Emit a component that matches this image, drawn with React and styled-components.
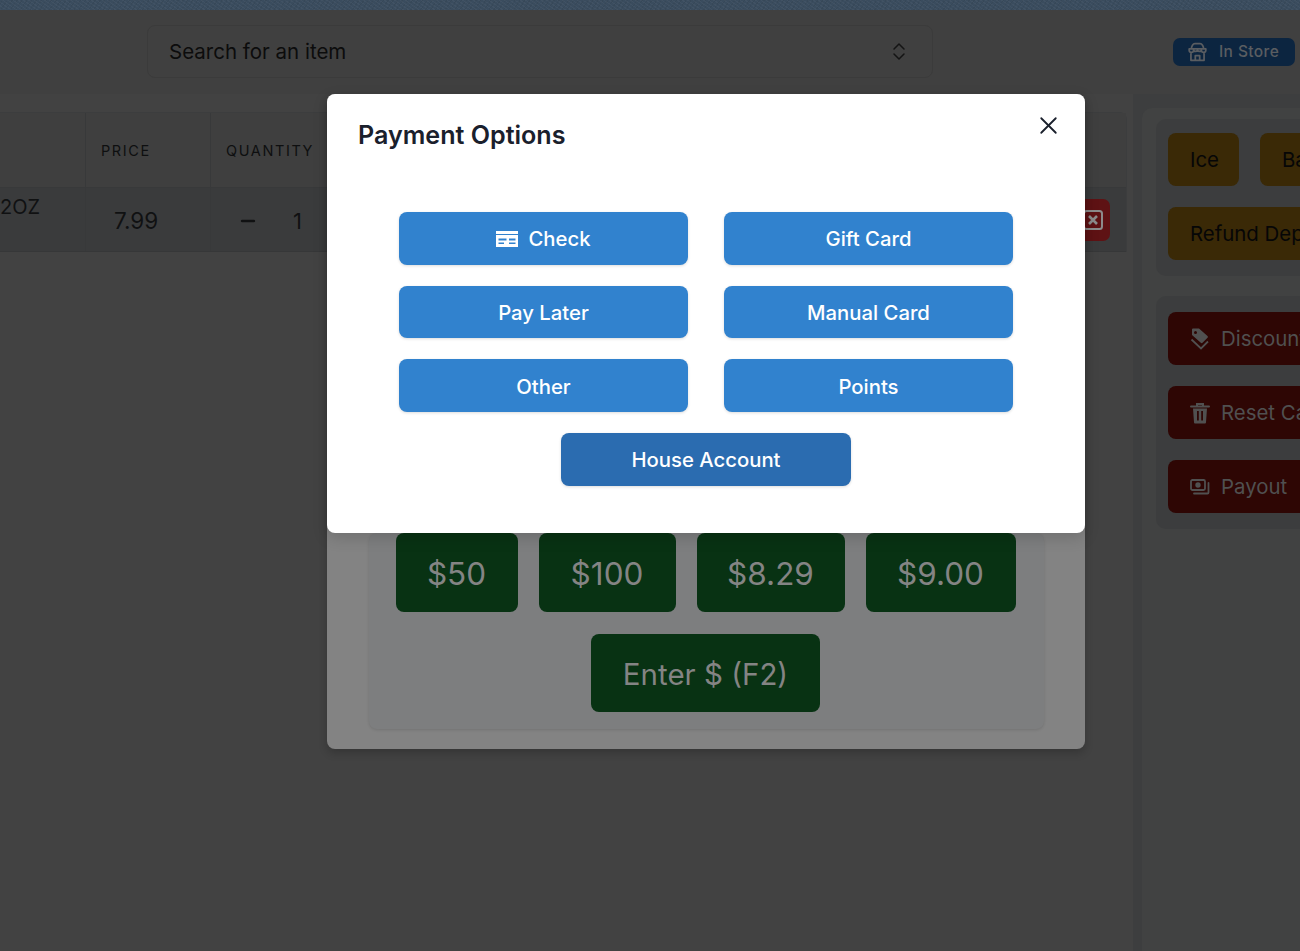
import React from "react";
import styled, { createGlobalStyle } from "styled-components";
import { X, Minus } from "lucide-react";

const Global = createGlobalStyle`
  html, body { margin: 0; padding: 0; height: 100%; }
  body { background: #404040; font-family: Inter, "Noto Sans", sans-serif; overflow: hidden; }
  * { box-sizing: border-box; }
`;

const Page = styled.div`
  position: relative;
  width: 1300px;
  height: 951px;
  overflow: hidden;
  background: #404040;
`;
const TopBand = styled.div`
  height: 10px;
  background:
    repeating-linear-gradient(35deg, rgba(255,255,255,.035) 0 1px, transparent 1px 3px),
    repeating-linear-gradient(-55deg, rgba(0,0,0,.06) 0 1px, transparent 1px 4px),
    #3a4c5e;
`;
const Header = styled.header`
  height: 84px;
  display: flex;
  align-items: center;
  padding: 0 5px 0 147px;
  background: #404040;
`;
const SearchBox = styled.div`
  width: 786px;
  height: 53px;
  margin-top: -1px;
  display: flex;
  align-items: center;
  justify-content: space-between;
  padding: 0 26px 0 21px;
  border: 1px solid #3b3b3b;
  border-radius: 8px;
  font-size: 20.500px;
  color: #0c0c0c;
`;
const StoreBadge = styled.div`
  margin-left: auto;
  margin-top: -1px;
  width: 122px;
  height: 28px;
  display: flex;
  align-items: center;
  gap: 11px;
  padding-left: 14px;
  border-radius: 7px;
  background: #0c2540;
  color: #5a5d61;
  font-size: 15.500px;
  font-weight: 500;
  letter-spacing: 0.4px;
`;
const Body = styled.main`
  height: 857px;
  display: grid;
  grid-template-columns: 1133px 1fr;
  background: #404040;
`;
const LeftPane = styled.section`
  padding: 18px 6px 0 0;
  background: #424242;
`;
const TableFrame = styled.div`
  height: 140px;
  border: 1px solid #3c3d3e;
  border-left: 0;
  border-radius: 0 8px 0 0;
`;
const HeadRow = styled.div`
  height: 75px;
  display: grid;
  grid-template-columns: 86px 125px 1fr;
  background: #3f3f3f;
  border-bottom: 1px solid #38393a;
`;
const DataRow = styled.div`
  height: 64px;
  display: grid;
  grid-template-columns: 86px 125px 1fr;
  background: #3a3b3c;
  border-bottom: 1px solid #363738;
  position: relative;
`;
const HeadCell = styled.div`
  display: flex;
  align-items: center;
  padding-left: 15px;
  border-right: 1px solid #38393a;
  font-size: 14.500px;
  font-weight: 400;
  letter-spacing: 1.600px;
  color: #0e0f10;
  &:last-child { border-right: 0; }
`;
const NameCell = styled.div`
  padding-top: 7px;
  font-size: 20px;
  color: #101112;
  border-right: 1px solid #38393a;
`;
const PriceCell = styled.div`
  display: flex;
  align-items: center;
  padding: 2px 0 0 28px;
  font-size: 22.500px;
  color: #101112;
  border-right: 1px solid #38393a;
`;
const QtyCell = styled.div`
  display: flex;
  align-items: center;
  padding: 2px 0 0 27px;
  gap: 35px;
  font-size: 22px;
  color: #101112;
`;
const DeleteButton = styled.div`
  position: absolute;
  right: 16px;
  top: 11px;
  width: 42px;
  height: 42px;
  border-radius: 7px;
  background: #5e1214;
  display: flex;
  align-items: center;
  justify-content: flex-end;
  padding-right: 7px;
  color: #8c8c8c;
`;
const RightPane = styled.aside`
  padding: 14px 0 0 9px;
  background: #3d3e3f;
`;
const RightSheet = styled.div`
  height: 100%;
  border-radius: 10px 0 0 0;
  background: #414242;
  padding: 11px 0 0 14px;
  display: flex;
  flex-direction: column;
  gap: 20px;
`;
const ActionGroup = styled.div`
  background: #3c3d3e;
  border-radius: 10px 0 0 10px;
  padding: ${(p) => (p.$tight ? "14px" : "16px")} 0 16px 12px;
  display: flex;
  flex-direction: column;
  gap: 21px;
  white-space: nowrap;
  overflow: hidden;
`;
const ActionRow = styled.div`
  display: flex;
  gap: 21px;
`;
const ActionButton = styled.div`
  height: 53px;
  padding: 0 20px 0 22px;
  flex: none;
  align-self: flex-start;
  display: flex;
  align-items: center;
  gap: 11px;
  border-radius: 8px;
  font-size: 20.400px;
  background: ${(p) => (p.$tone === "red" ? "#2e0604" : "#3a2906")};
  color: ${(p) => (p.$tone === "red" ? "#505050" : "#060606")};
`;
const Under = styled.div`
  position: absolute;
  left: 327px;
  top: 94px;
  width: 758px;
  height: 655px;
  background: #838383;
  border-radius: 8px;
  box-shadow: 0 4px 8px rgba(0,0,0,.2);
  padding: 0 41px 20px 42px;
  display: flex;
  flex-direction: column;
  justify-content: flex-end;
`;
const CashPanel = styled.div`
  background: #7d7e7f;
  border-radius: 8px;
  box-shadow: 0 1px 3px rgba(0,0,0,.12);
  padding: 0 2px 17px 0;
  display: flex;
  flex-direction: column;
  align-items: center;
  gap: 22px;
`;
const CashRow = styled.div`
  display: flex;
  gap: 21px;
`;
const CashButton = styled.div`
  height: ${(p) => (p.$small ? 78 : 79)}px;
  width: ${(p) => p.$width}px;
  padding-top: 1px;
  display: flex;
  align-items: center;
  justify-content: center;
  border-radius: 8px;
  background: #083213;
  color: #848484;
  font-size: ${(p) => (p.$small ? "29.500px" : "31.500px")};
`;
const Sheet = styled.div`
  position: absolute;
  left: 327px;
  top: 94px;
  width: 758px;
  height: 439px;
  background: #fff;
  border-radius: 8px;
  box-shadow: 0 5px 15px rgba(0,0,0,.15);
  padding: 25px 32px 0;
`;
const Title = styled.h2`
  margin: 0 0 0 -1px;
  height: 32px;
  line-height: 32px;
  font-size: 25.100px;
  font-weight: 600;
  color: #1a202c;
`;
const CloseButton = styled.button`
  position: absolute;
  top: 15px;
  right: 21px;
  width: 32px;
  height: 32px;
  padding: 0;
  border: 0;
  background: none;
  color: #1a202c;
  display: flex;
  align-items: center;
  justify-content: center;
`;
const OptionGrid = styled.div`
  margin: 61px 40px 0;
  display: grid;
  grid-template-columns: 289px 289px;
  gap: 21px 36px;
  justify-content: space-between;
`;
const OptionButton = styled.button`
  height: 52.670px;
  border: 0;
  border-radius: 8px;
  padding: 1px 0 0;
  background: ${(p) => (p.$dark ? "#2b6cb0" : "#3182ce")};
  color: #fff;
  font-family: inherit;
  font-size: 20.300px;
  font-weight: 500;
  display: flex;
  align-items: center;
  justify-content: center;
  gap: 10px;
  box-shadow: 0 1px 3px rgba(0,0,0,.14);
  ${(p) => p.$center && `grid-column: 1 / -1; justify-self: center; width: 290px;`}
`;

const CheckIcon = () => (
  <svg width="22" height="16" viewBox="0 0 22 16" fill="currentColor" aria-hidden="true">
    <path fillRule="evenodd" d="M0 0h22v3H0zM0 4h22v12H0zM2.500 7.500v2h8v-2zm0 4v1.500h5.500V11.500zM13 7.500v2h6.500v-2zm0 4v1.500h6.500V11.500z" />
  </svg>
);
const UpDownIcon = () => (
  <svg width="14" height="19" viewBox="0 0 14 19" fill="none" stroke="#141414" strokeWidth="1.500" strokeLinecap="round" strokeLinejoin="round" aria-hidden="true">
    <path d="M2 7l5-5 5 5M2 12l5 5 5-5" />
  </svg>
);
const StoreIcon = () => (
  <svg width="21" height="22" viewBox="0 0 24 24" fill="none" stroke="currentColor" strokeWidth="2" strokeLinecap="round" strokeLinejoin="round" aria-hidden="true">
    <path d="M5 8.500C5 5 7 2.500 9 2.500h6c2 0 4 2.500 4 6M2.500 8.500h19v1.500a2.500 2.500 0 0 1-5 0 2.500 2.500 0 0 1-4.500 0 2.500 2.500 0 0 1-4.500 0 2.500 2.500 0 0 1-5 0zM4.500 13v8.500h15V13M9.500 21.500V16h5v5.500" />
  </svg>
);
const TagIcon = () => (
  <svg width="20" height="22" viewBox="0 0 20 22" aria-hidden="true">
    <path fill="currentColor" d="M3 0.500h6L17.500 8a1.200 1.200 0 0 1 0 1.800l-5 5a1.200 1.200 0 0 1-1.700 0L2 7V1.500a1 1 0 0 1 1-1zm2.500 2.500A1.500 1.500 0 1 0 5.500 6 1.500 1.500 0 0 0 5.500 3z" fillRule="evenodd" />
    <path fill="none" stroke="currentColor" strokeWidth="1.800" d="M1.500 11.500l9.500 9 7-7" />
  </svg>
);
const TrashIcon = () => (
  <svg width="20" height="22" viewBox="0 0 20 22" aria-hidden="true">
    <path fill="none" stroke="currentColor" strokeWidth="2" strokeLinecap="round" d="M1 4.500h18M7 4V2h6v2" />
    <path fill="currentColor" fillRule="evenodd" d="M3 6.500h14l-1 14a1 1 0 0 1-1 1H5a1 1 0 0 1-1-1zM7 9v9.500h1.800V9zm4.200 0v9.500H13V9z" />
  </svg>
);
const CashIcon = () => (
  <svg width="20" height="16" viewBox="0 0 20 16" fill="none" stroke="currentColor" strokeWidth="1.800" strokeLinejoin="round" aria-hidden="true">
    <rect x="1" y="1" width="14" height="10" rx="1.500" />
    <circle cx="8" cy="6" r="1.800" fill="currentColor" />
    <path d="M18.500 4v9.500a1 1 0 0 1-1 1H4" strokeLinecap="round" />
  </svg>
);
const DeleteIcon = () => (
  <svg width="20" height="20" viewBox="0 0 20 20" fill="none" stroke="currentColor" aria-hidden="true">
    <rect x="1" y="1" width="18" height="18" rx="2.500" strokeWidth="2" />
    <path d="M6 6l8 8M14 6l-8 8" strokeWidth="2.600" />
  </svg>
);

export default function App() {
  return (
    <Page>
      <Global />
      <TopBand />
      <Header>
        <SearchBox>
          Search for an item
          <UpDownIcon />
        </SearchBox>
        <StoreBadge><StoreIcon />In Store</StoreBadge>
      </Header>
      <Body>
        <LeftPane>
          <TableFrame>
            <HeadRow>
              <HeadCell />
              <HeadCell>PRICE</HeadCell>
              <HeadCell>QUANTITY</HeadCell>
            </HeadRow>
            <DataRow>
              <NameCell>2OZ</NameCell>
              <PriceCell>7.99</PriceCell>
              <QtyCell><Minus size={20} strokeWidth={3.200} />1</QtyCell>
              <DeleteButton><DeleteIcon /></DeleteButton>
            </DataRow>
          </TableFrame>
        </LeftPane>
        <RightPane>
          <RightSheet>
            <ActionGroup $tight>
              <ActionRow>
                <ActionButton>Ice</ActionButton>
                <ActionButton>Bags</ActionButton>
              </ActionRow>
              <ActionRow>
                <ActionButton>Refund Deposit</ActionButton>
              </ActionRow>
            </ActionGroup>
            <ActionGroup>
              <ActionButton $tone="red"><TagIcon />Discount</ActionButton>
              <ActionButton $tone="red"><TrashIcon />Reset Cart</ActionButton>
              <ActionButton $tone="red"><CashIcon />Payout</ActionButton>
            </ActionGroup>
          </RightSheet>
        </RightPane>
      </Body>
      <Under>
        <CashPanel>
          <CashRow>
            <CashButton $width={122}>$50</CashButton>
            <CashButton $width={137}>$100</CashButton>
            <CashButton $width={148}>$8.29</CashButton>
            <CashButton $width={150}>$9.00</CashButton>
          </CashRow>
          <CashButton $width={229} $small>Enter $ (F2)</CashButton>
        </CashPanel>
      </Under>
      <Sheet>
        <Title>Payment Options</Title>
        <CloseButton aria-label="Close"><X size={29} strokeWidth={1.500} /></CloseButton>
        <OptionGrid>
          <OptionButton><CheckIcon />Check</OptionButton>
          <OptionButton>Gift Card</OptionButton>
          <OptionButton>Pay Later</OptionButton>
          <OptionButton>Manual Card</OptionButton>
          <OptionButton>Other</OptionButton>
          <OptionButton>Points</OptionButton>
          <OptionButton $dark $center>House Account</OptionButton>
        </OptionGrid>
      </Sheet>
    </Page>
  );
}
